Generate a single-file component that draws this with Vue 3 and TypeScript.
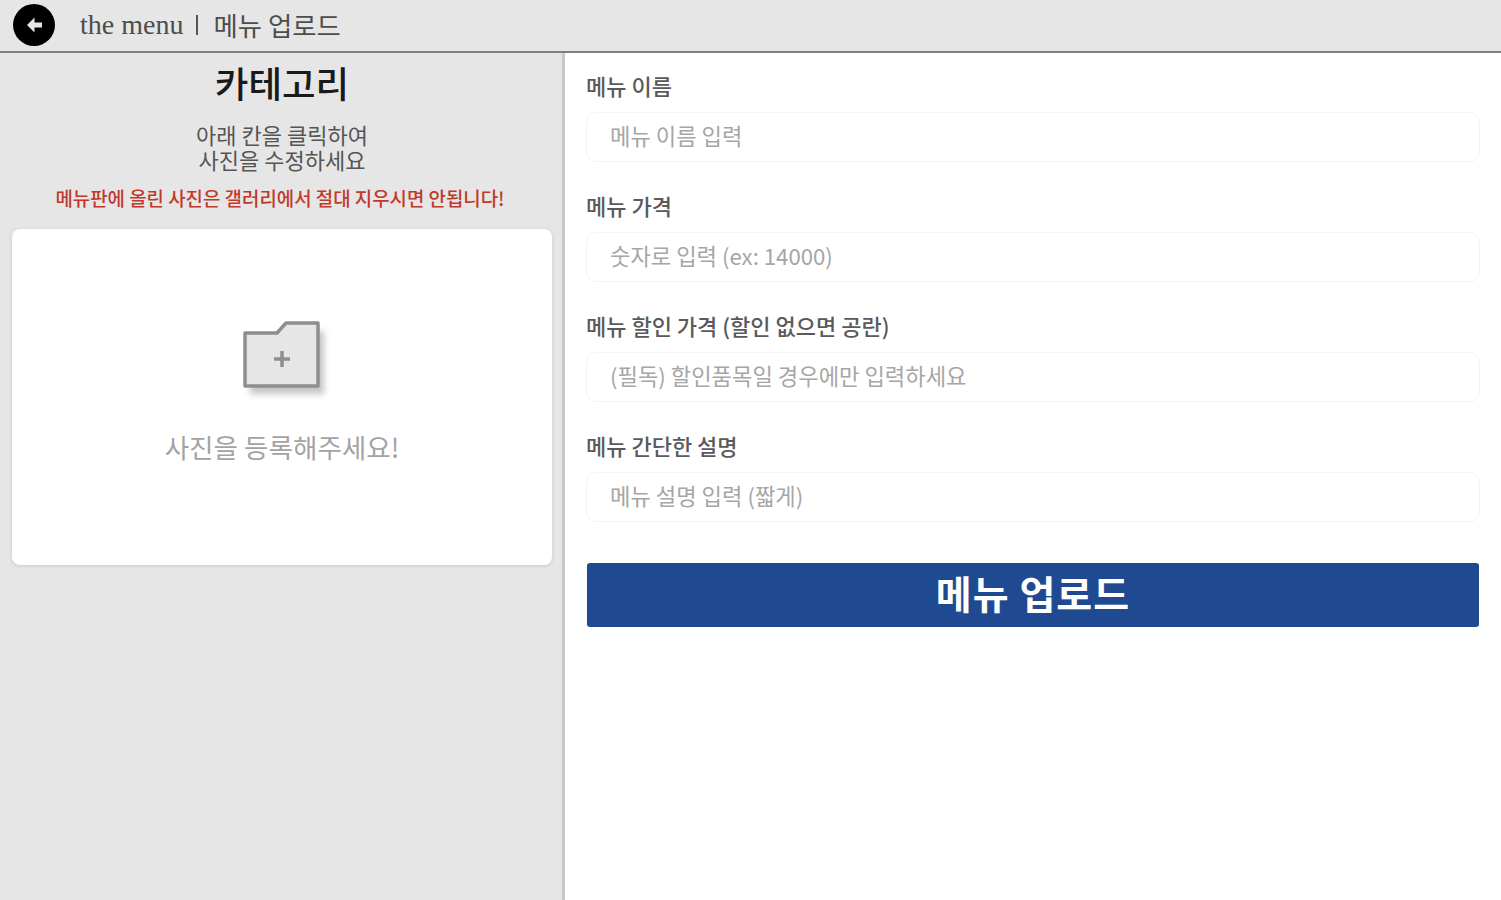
<script setup lang="ts">
interface Field {
  label: string;
  placeholder: string;
}
const fields: Field[] = [
  { label: '메뉴 이름', placeholder: '메뉴 이름 입력' },
  { label: '메뉴 가격', placeholder: '숫자로 입력 (ex: 14000)' },
  { label: '메뉴 할인 가격 (할인 없으면 공란)', placeholder: '(필독) 할인품목일 경우에만 입력하세요' },
  { label: '메뉴 간단한 설명', placeholder: '메뉴 설명 입력 (짧게)' },
];
</script>

<template>
  <div class="page">
    <header class="topbar">
      <button class="back" type="button" aria-label="back">
        <svg width="42" height="42" viewBox="0 0 42 42">
          <circle cx="21" cy="21" r="21" fill="#000" />
          <path d="M21.500 13.500 14 21l7.500 7.500v-5H29v-5h-7.500z" fill="#e6e6e6" />
        </svg>
      </button>
      <span class="title">the menu</span>
      <span class="bar"></span>
      <span class="title ko">메뉴 업로드</span>
    </header>
    <main class="content">
      <section class="left">
        <h1>카테고리</h1>
        <div class="hint">
          <div>아래 칸을 클릭하여</div>
          <div>사진을 수정하세요</div>
        </div>
        <p class="warn">메뉴판에 올린 사진은 갤러리에서 절대 지우시면 안됩니다!</p>
        <div class="card">
          <svg class="folder" width="96" height="92" viewBox="0 0 96 92">
            <defs>
              <filter id="blur" x="-20%" y="-20%" width="140%" height="140%">
                <feGaussianBlur stdDeviation="3" />
              </filter>
            </defs>
            <path d="M16 24h32l9-10h33v63H16z" fill="#c4c4c4" filter="url(#blur)" />
            <path d="M11 16h32l9-10h32v63H11z" fill="#e6e6e6" stroke="#8e8e8e" stroke-width="3.500" stroke-linejoin="round" />
            <path d="M40 42h16M48 34v16" stroke="#8e8e8e" stroke-width="3.500" fill="none" />
          </svg>
          <p class="card-text">사진을 등록해주세요!</p>
        </div>
      </section>
      <section class="right">
        <div v-for="field in fields" :key="field.label" class="field">
          <label>{{ field.label }}</label>
          <input type="text" :placeholder="field.placeholder" />
        </div>
        <button class="submit" type="button">메뉴 업로드</button>
      </section>
    </main>
  </div>
</template>

<style scoped>
.page {
  width: 1501px;
  height: 900px;
  display: flex;
  flex-direction: column;
  overflow: hidden;
  background: #fff;
  font-family: "Noto Sans CJK KR", "Liberation Sans", sans-serif;
}
.topbar {
  flex: 0 0 53px;
  box-sizing: border-box;
  display: flex;
  align-items: center;
  padding: 2px 0 4px 13px;
  background: #e6e6e6;
  border-bottom: 2px solid #808080;
}
.back {
  width: 42px;
  height: 42px;
  padding: 0;
  border: 0;
  background: none;
  display: block;
  margin-right: 25px;
}
.back svg {
  display: block;
}
.title {
  font-family: "Liberation Serif", serif;
  font-size: 28px;
  line-height: 30px;
  color: #4d4d4d;
}
.title.ko {
  font-family: "Noto Sans CJK KR", sans-serif;
  font-size: 26.400px;
}
.bar {
  width: 2px;
  height: 20px;
  margin: 0 15px 0 13px;
  background: #555;
}
.content {
  flex: 1;
  display: flex;
  min-height: 0;
}
.left {
  flex: 0 0 565px;
  box-sizing: border-box;
  background: #e6e6e6;
  border-right: 3px solid #c8c8c8;
  display: flex;
  flex-direction: column;
  align-items: center;
  padding: 8px 10px 0 12px;
}
h1 {
  margin: 0;
  font-size: 36.500px;
  line-height: 43px;
  font-weight: 500;
  color: #1a1a1a;
}
.hint {
  margin: 18px 0 0;
  font-size: 22px;
  line-height: 25px;
  text-align: center;
  color: #555;
}
.warn {
  margin: 14px 4px 0 0;
  font-size: 18.900px;
  line-height: 24px;
  font-weight: 500;
  color: #c0392b;
  white-space: nowrap;
}
.card {
  margin-top: 19px;
  width: 100%;
  height: 336px;
  box-sizing: border-box;
  background: #fff;
  border-radius: 8px;
  box-shadow: 0 1px 4px rgba(0, 0, 0, 0.12);
  display: flex;
  flex-direction: column;
  align-items: center;
  padding-top: 88px;
}
.folder {
  display: block;
}
.card-text {
  margin: 23px 0 0;
  font-size: 26.600px;
  line-height: 30px;
  color: #a3a3a3;
}
.right {
  flex: 1;
  box-sizing: border-box;
  display: flex;
  flex-direction: column;
  padding: 18px 21px 0;
}
.field {
  display: flex;
  flex-direction: column;
  height: 120px;
}
label {
  font-size: 22px;
  line-height: 29px;
  height: 41px;
  font-weight: 500;
  color: #5a5a5a;
}
input {
  height: 50px;
  box-sizing: border-box;
  border: 1px solid #f4f4f4;
  border-radius: 10px;
  padding: 0 23px 4px;
  background: #fff;
  font-family: inherit;
  font-size: 22.200px;
  outline: none;
}
input::placeholder {
  color: #a6a6a6;
  opacity: 1;
}
.submit {
  margin: 12px 1px 0;
  height: 64px;
  border: 0;
  border-radius: 3px;
  background: #1f4a91;
  color: #fff;
  font-family: inherit;
  font-size: 39px;
  font-weight: 700;
  letter-spacing: 1px;
  line-height: 44px;
  padding: 0 0 6px;
}
</style>
